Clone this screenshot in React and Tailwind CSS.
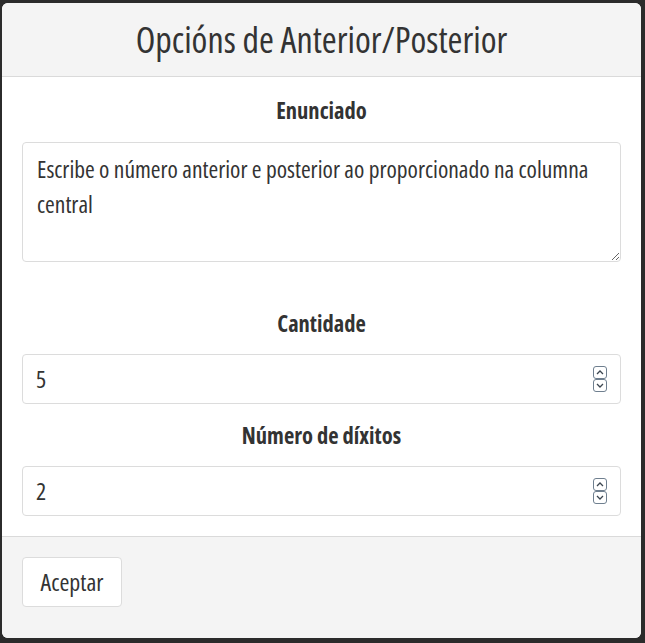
import React from 'react';

const FONT = { fontFamily: '"Open Sans", "Noto Sans", sans-serif', fontStretch: '75%' };

function Spinner() {
  return (
    <svg width="14" height="26" viewBox="0 0 14 26" className="shrink-0">
      <rect x="0.5" y="0.5" width="13" height="12" rx="2.5" fill="none" stroke="#6f7f8f" />
      <rect x="0.5" y="13.5" width="13" height="12" rx="2.5" fill="none" stroke="#6f7f8f" />
      <path d="M4 8 L7 5 L10 8" fill="none" stroke="#3c4650" strokeWidth="1.3" />
      <path d="M4 18 L7 21 L10 18" fill="none" stroke="#3c4650" strokeWidth="1.3" />
    </svg>
  );
}

function NumberField({ value }) {
  return (
    <div className="h-[50px] w-full rounded border border-[#dcdcdc] bg-white flex items-center pl-[13px] pr-[13px]">
      <span className="flex-1 text-[24px] text-[#333]">{value}</span>
      <Spinner />
    </div>
  );
}

export default function App() {
  return (
    <div className="w-[645px] h-[643px] bg-[#2b2b2b] pt-[3px] pl-[2px]" style={FONT}>
      <div className="w-[639px] h-[635px] rounded-[6px] overflow-hidden bg-white flex flex-col">
        <div className="h-[74px] bg-[#f4f4f4] border-b border-[#dadada] flex items-center justify-center">
          <h1 className="text-[36px] text-[#333] leading-none">Opcións de Anterior/Posterior</h1>
        </div>

        <div className="flex-1 px-[20px] flex flex-col">
          <p className="mt-[23px] text-center text-[22.5px] font-bold text-[#333] leading-none">Enunciado</p>
          <div className="relative mt-[19px]">
            <textarea
              readOnly
              defaultValue="Escribe o número anterior e posterior ao proporcionado na columna central"
              className="block w-full h-[120px] rounded border border-[#dcdcdc] px-[14px] pt-[9px] text-[23.5px] leading-[35px] text-[#333] outline-none resize-y"
              style={FONT}
            />
          </div>

          <p className="mt-[51px] text-center text-[22.5px] font-bold text-[#333] leading-none">Cantidade</p>
          <div className="mt-[19px]">
            <NumberField value="5" />
          </div>

          <p className="mt-[21px] text-center text-[22.5px] font-bold text-[#333] leading-none">Número de díxitos</p>
          <div className="mt-[18px]">
            <NumberField value="2" />
          </div>
        </div>

        <div className="h-[102px] bg-[#f4f4f4] border-t border-[#dadada] px-[20px] pt-[20px]">
          <button className="h-[50px] w-[100px] rounded border border-[#dcdcdc] bg-white text-[24px] text-[#333]" style={FONT}>
            Aceptar
          </button>
        </div>
      </div>
    </div>
  );
}
